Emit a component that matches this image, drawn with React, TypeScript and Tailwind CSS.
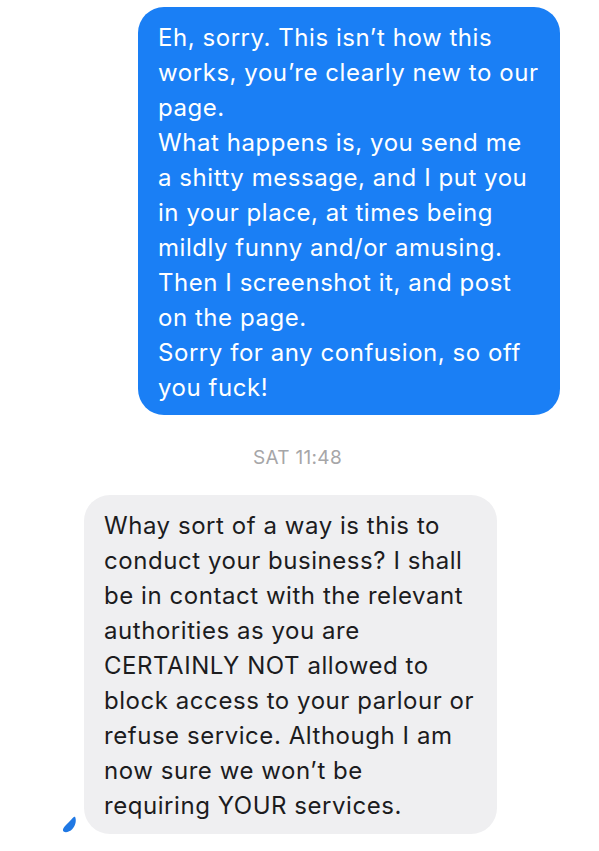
const sent = [
	"Eh, sorry. This isn’t how this",
	"works, you’re clearly new to our",
	"page.",
	"What happens is, you send me",
	"a shitty message, and I put you",
	"in your place, at times being",
	"mildly funny and/or amusing.",
	"Then I screenshot it, and post",
	"on the page.",
	"Sorry for any confusion, so off",
	"you fuck!",
];

const received = [
	"Whay sort of a way is this to",
	"conduct your business? I shall",
	"be in contact with the relevant",
	"authorities as you are",
	"CERTAINLY NOT allowed to",
	"block access to your parlour or",
	"refuse service. Although I am",
	"now sure we won’t be",
	"requiring YOUR services.",
];

function Droplet() {
	return (
		<svg width="15" height="17" viewBox="0 0 15 17" className="shrink-0">
			<path
				d="M13 0.8 C14.6 4 13.8 9.4 10.4 13 C7.8 15.8 4 16.8 2 15.8 C0.4 15 0.6 12.6 2.6 10.4 C5.2 7.6 7.4 5.6 9.6 3.2 C11 1.6 12 0.4 13 0.8 Z"
				fill="#1f78e4"
			/>
		</svg>
	);
}

export default function App() {
	return (
		<div className="flex min-h-[851px] w-[599px] flex-col bg-white font-['Inter','Liberation_Sans',sans-serif]">
			<div className="mr-[39px] ml-auto mt-[7px] w-[422px] rounded-[26px] bg-[#1a7ff5] pt-[13px] pb-[10px] pl-[20px] text-[24px] leading-[35px] tracking-[0.55px] text-white">
				{sent.map((line) => (
					<div key={line} className="whitespace-nowrap">
						{line}
					</div>
				))}
			</div>
			<div className="mt-[31px] text-center text-[19px] leading-[24px] tracking-[0.3px] text-[#a6a6a8]">
				<span className="mr-[4px]">SAT 11:48</span>
			</div>
			<div className="mt-[25px] flex items-end gap-[7px] pl-[62px]">
				<div className="mb-[1px]">
					<Droplet />
				</div>
				<div className="w-[413px] rounded-[26px] bg-[#efeff1] pt-[13px] pb-[11px] pl-[20px] text-[24px] leading-[35px] tracking-[0.55px] text-[#1c1c1e]">
					{received.map((line) => (
						<div key={line} className="whitespace-nowrap">
							{line}
						</div>
					))}
				</div>
			</div>
		</div>
	);
}
